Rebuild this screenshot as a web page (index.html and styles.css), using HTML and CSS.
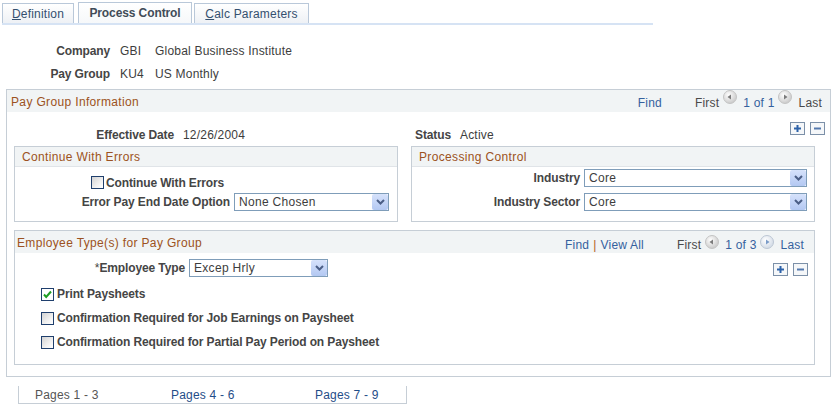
FILE: index.html
```html
<!DOCTYPE html>
<html lang="en">
<head>
  <meta charset="UTF-8" />
  <title>Pay Group - Process Control</title>
  <link rel="stylesheet" href="styles.css">
</head>
<body>

  <div class="tabs">
    <a class="tab tab-def"><u>D</u>efinition</a>
    <span class="tab tab-active">Process Control</span>
    <a class="tab tab-calc"><u>C</u>alc Parameters</a>
  </div>

  <div class="keys">
    <span class="lbl">Company</span><span class="code">GBI</span><span>Global Business Institute</span>
    <span class="lbl">Pay Group</span><span class="code">KU4</span><span>US Monthly</span>
  </div>

  <section class="group">
    <div class="group-head">
      <span class="title">Pay Group Information</span>
      <div class="nav nav-top">
        <a class="link find">Find</a>
        <span class="off">First</span>
        <svg class="pg pg-prev" width="14" height="14" viewBox="0 0 14 14"><defs><radialGradient id="g1" cx="0.4" cy="0.35" r="0.7"><stop offset="0" stop-color="#ffffff"/><stop offset="1" stop-color="#c6c6c6"/></radialGradient></defs><circle cx="7" cy="7" r="6.5" fill="url(#g1)" stroke="#c4c4c4"/><path d="M4.5 7 8 4.5v5z" fill="#7b7b7b"/></svg>
        <a class="link">1 of 1</a>
        <svg class="pg pg-next" width="14" height="14" viewBox="0 0 14 14"><defs><radialGradient id="g2" cx="0.4" cy="0.35" r="0.7"><stop offset="0" stop-color="#ffffff"/><stop offset="1" stop-color="#c6c6c6"/></radialGradient></defs><circle cx="7" cy="7" r="6.5" fill="url(#g2)" stroke="#c4c4c4"/><path d="M9.5 7 6 4.5v5z" fill="#7b7b7b"/></svg>
        <span class="off">Last</span>
      </div>
    </div>

    <div class="eff-row">
      <span class="lbl eff-lbl">Effective Date</span>
      <span class="eff-val">12/26/2004</span>
      <span class="lbl">Status</span>
      <span class="stat-val">Active</span>
      <span class="rowbtns rowbtns-top">
        <svg width="15" height="13" viewBox="0 0 15 13"><rect x="0.5" y="0.5" width="14" height="12" fill="#f5f7f9" stroke="#7c90a8"/><path d="M7.5 3v7M4 6.5h7" stroke="#2d62a9" stroke-width="2"/></svg>
        <svg width="15" height="13" viewBox="0 0 15 13"><rect x="0.5" y="0.5" width="14" height="12" fill="#f5f7f9" stroke="#7c90a8"/><path d="M4 6.5h7" stroke="#5479ae" stroke-width="2"/></svg>
      </span>
    </div>

    <div class="sub-row">
      <div class="sub">
        <div class="sub-head">Continue With Errors</div>
        <div class="check-row cwe">
          <span class="cb"></span>
          <span class="lbl">Continue With Errors</span>
        </div>
        <div class="field-row cwe-field">
          <span class="lbl field-lbl lbl-err">Error Pay End Date Option</span>
          <div class="select sel-err"><span>None Chosen</span><span class="arr"><svg width="9" height="6" viewBox="0 0 9 6"><path d="M1 1l3.5 3.5L8 1" fill="none" stroke="#4b5e86" stroke-width="2"/></svg></span></div>
        </div>
      </div>

      <div class="sub">
        <div class="sub-head">Processing Control</div>
        <div class="field-row pc-first">
          <span class="lbl field-lbl lbl-ind">Industry</span>
          <div class="select sel-ind"><span>Core</span><span class="arr"><svg width="9" height="6" viewBox="0 0 9 6"><path d="M1 1l3.5 3.5L8 1" fill="none" stroke="#4b5e86" stroke-width="2"/></svg></span></div>
        </div>
        <div class="field-row pc-next">
          <span class="lbl field-lbl lbl-ind">Industry Sector</span>
          <div class="select sel-ind"><span>Core</span><span class="arr"><svg width="9" height="6" viewBox="0 0 9 6"><path d="M1 1l3.5 3.5L8 1" fill="none" stroke="#4b5e86" stroke-width="2"/></svg></span></div>
        </div>
      </div>
    </div>

    <div class="emp">
      <div class="group-head emp-head">
        <span class="title">Employee Type(s) for Pay Group</span>
        <div class="nav nav-emp">
          <a class="link">Find</a>
          <span class="sep">|</span>
          <a class="link find">View All</a>
          <span class="off">First</span>
          <svg class="pg pg-prev" width="14" height="14" viewBox="0 0 14 14"><defs><radialGradient id="g3" cx="0.4" cy="0.35" r="0.7"><stop offset="0" stop-color="#ffffff"/><stop offset="1" stop-color="#c6c6c6"/></radialGradient></defs><circle cx="7" cy="7" r="6.5" fill="url(#g3)" stroke="#c4c4c4"/><path d="M4.5 7 8 4.5v5z" fill="#7b7b7b"/></svg>
          <a class="link">1 of 3</a>
          <svg class="pg pg-next" width="14" height="14" viewBox="0 0 14 14"><defs><radialGradient id="g4" cx="0.4" cy="0.35" r="0.7"><stop offset="0" stop-color="#ffffff"/><stop offset="1" stop-color="#cfd8e4"/></radialGradient></defs><circle cx="7" cy="7" r="6.5" fill="url(#g4)" stroke="#bcc6d3"/><path d="M9.5 7 6 4.5v5z" fill="#7a9bc8"/></svg>
          <a class="link">Last</a>
        </div>
      </div>

      <div class="field-row emp-type">
        <span class="lbl field-lbl lbl-emp"><span class="req">*</span>Employee Type</span>
        <div class="select sel-emp"><span>Excep Hrly</span><span class="arr"><svg width="9" height="6" viewBox="0 0 9 6"><path d="M1 1l3.5 3.5L8 1" fill="none" stroke="#4b5e86" stroke-width="2"/></svg></span></div>
        <span class="rowbtns rowbtns-emp">
          <svg width="15" height="13" viewBox="0 0 15 13"><rect x="0.5" y="0.5" width="14" height="12" fill="#f5f7f9" stroke="#7c90a8"/><path d="M7.5 3v7M4 6.5h7" stroke="#2d62a9" stroke-width="2"/></svg>
          <svg width="15" height="13" viewBox="0 0 15 13"><rect x="0.5" y="0.5" width="14" height="12" fill="#f5f7f9" stroke="#7c90a8"/><path d="M4 6.5h7" stroke="#5479ae" stroke-width="2"/></svg>
        </span>
      </div>

      <div class="checks">
        <div class="check-row">
          <span class="cb cb-on"><svg width="11" height="11" viewBox="0 0 11 11"><path d="M2 5.5l2.2 2.5L9 2.5" fill="none" stroke="#1f9e24" stroke-width="2"/></svg></span>
          <span class="lbl">Print Paysheets</span>
        </div>
        <div class="check-row">
          <span class="cb"></span>
          <span class="lbl">Confirmation Required for Job Earnings on Paysheet</span>
        </div>
        <div class="check-row">
          <span class="cb"></span>
          <span class="lbl">Confirmation Required for Partial Pay Period on Paysheet</span>
        </div>
      </div>
    </div>
  </section>

  <div class="pages">
    <span class="page page-cur">Pages 1 - 3</span>
    <a class="page page-link">Pages 4 - 6</a>
    <a class="page">Pages 7 - 9</a>
  </div>

</body>
</html>
```

FILE: styles.css
```css
body {
  margin: 0;
  font-family: "Liberation Sans", Arial, sans-serif;
  font-size: 12px;
  color: #3d3d3d;
  letter-spacing: 0.2px;
  background: #fff;
}

.lbl {
  font-weight: bold;
  letter-spacing: -0.12px;
  color: #454545;
}

.req {
  font-weight: normal;
}

/* tabs */
.tabs {
  display: flex;
  align-items: flex-end;
  width: 651px;
  height: 23px;
  margin-left: 2px;
  border-bottom: 2px solid #d6e3f4;
}

.tab {
  box-sizing: border-box;
  height: 20px;
  border: 1px solid #b9c8d9;
  border-bottom: none;
  background: linear-gradient(#ffffff, #eef1f5);
  color: #34506f;
  line-height: 21px;
  text-align: center;
}

.tab-def {
  width: 72px;
  margin-right: 4px;
}

.tab-active {
  width: 114px;
  height: 21px;
  margin-right: 2px;
  font-weight: bold;
  letter-spacing: -0.1px;
  color: #414c58;
  background: linear-gradient(#ffffff, #f6f8fa);
}

.tab-calc {
  width: 115px;
}

/* key fields */
.keys {
  display: grid;
  grid-template-columns: 110px 45px auto;
  grid-auto-rows: 23px;
  align-items: center;
  margin-top: 14px;
}

.keys .lbl {
  text-align: right;
}

.keys .code {
  padding-left: 10px;
}

/* group boxes */
.group {
  box-sizing: border-box;
  width: 825px;
  margin: 4px 0 0 6px;
  border: 1px solid #c6ced6;
  padding-bottom: 11px;
}

.group-head {
  display: flex;
  align-items: center;
  height: 22px;
  padding: 0 8px 0 4px;
  background: #f1f4f5;
}

.title {
  flex: 1;
  padding-top: 1px;
  color: #9c5221;
  letter-spacing: 0.35px;
}

.nav {
  display: flex;
  align-items: flex-start;
  align-self: stretch;
  line-height: 14px;
}

.nav > span, .nav > a {
  margin-top: 6px;
}

.nav-emp > span, .nav-emp > a {
  margin-top: 7px;
}

.nav-emp .pg {
  margin-top: 4px;
}

.link {
  color: #35619e;
}

.off {
  color: #4a4a4a;
}

.find {
  margin-right: 33px;
}

.sep {
  color: #b0601f;
  margin: 0 4px;
}

.pg {
  flex: none;
}

.pg-prev {
  margin: 0 6px 0 4px;
}

.pg-next {
  margin: 0 7px 0 3px;
}

.eff-row {
  display: flex;
  align-items: flex-start;
  height: 34px;
  line-height: 14px;
}

.eff-row > span {
  margin-top: 16px;
}

.eff-lbl {
  width: 167px;
  text-align: right;
}

.eff-val {
  width: 232px;
  margin-left: 9px;
}

.stat-val {
  margin-left: 9px;
}

.rowbtns {
  display: flex;
  gap: 5px;
  margin-left: auto;
}

.eff-row > .rowbtns-top {
  margin-top: 10px;
  margin-right: 5px;
}

.rowbtns-emp {
  align-self: flex-start;
  margin-top: 4px;
  margin-right: 6px;
}

.sub-row {
  display: grid;
  grid-template-columns: 384px 404px;
  column-gap: 13px;
  padding-left: 7px;
}

.sub {
  box-sizing: border-box;
  height: 76px;
  border: 1px solid #c6ced6;
}

.sub-head {
  height: 19px;
  padding-left: 7px;
  line-height: 20px;
  background: #f1f4f5;
  border-bottom: 1px solid #e0e4e8;
  color: #9c5221;
  letter-spacing: 0.35px;
}

.check-row {
  display: flex;
  align-items: center;
  gap: 3px;
}

.cwe {
  height: 13px;
  margin: 9px 0 0 76px;
  gap: 2px;
}

.cb {
  box-sizing: border-box;
  flex: none;
  display: flex;
  align-items: center;
  justify-content: center;
  width: 13px;
  height: 13px;
  border: 1px solid #1f3f6d;
  background: linear-gradient(135deg, #d2d2d2 0%, #f3f3f3 65%, #ffffff 100%);
}

.cb-on {
  background: #fff;
}

.field-row {
  display: flex;
  align-items: center;
}

.field-lbl {
  text-align: right;
  margin-right: 4px;
}

.cwe-field {
  margin-top: 4px;
}

.lbl-err {
  width: 215px;
}

.sel-err {
  width: 155px;
}

.pc-first {
  margin-top: 2px;
}

.pc-next {
  margin-top: 6px;
}

.lbl-ind {
  width: 168px;
}

.sel-ind {
  width: 223px;
}

.select {
  box-sizing: border-box;
  display: flex;
  align-items: center;
  height: 18px;
  padding-left: 4px;
  border: 1px solid #7f9db9;
  background: #fff;
  letter-spacing: 0.3px;
}

.select span:first-child {
  flex: 1;
}

.arr {
  display: flex;
  align-items: center;
  justify-content: center;
  width: 16px;
  height: 16px;
  border-radius: 2px;
  background: linear-gradient(#d6e2fb, #b3c8f2);
}

.emp {
  box-sizing: border-box;
  width: 801px;
  margin: 8px 0 0 7px;
  border: 1px solid #c6ced6;
  padding-bottom: 10px;
}

.emp-head {
  padding: 0 10px 0 2px;
}

.emp-type {
  align-items: flex-start;
  margin-top: 6px;
}

.lbl-emp {
  width: 170px;
  line-height: 18px;
}

.sel-emp {
  width: 139px;
}

.checks {
  margin-top: 5px;
  padding-left: 26px;
}

.checks .check-row {
  height: 24px;
}

/* page links */
.pages {
  box-sizing: border-box;
  display: flex;
  width: 389px;
  height: 18px;
  margin: 9px 0 0 18px;
  padding-left: 16px;
  border: 1px solid #c6ced6;
  border-top: none;
  line-height: 19px;
  color: #1f4d88;
}

.page-cur {
  width: 136px;
  color: #555;
}

.page-link {
  width: 144px;
}
```
